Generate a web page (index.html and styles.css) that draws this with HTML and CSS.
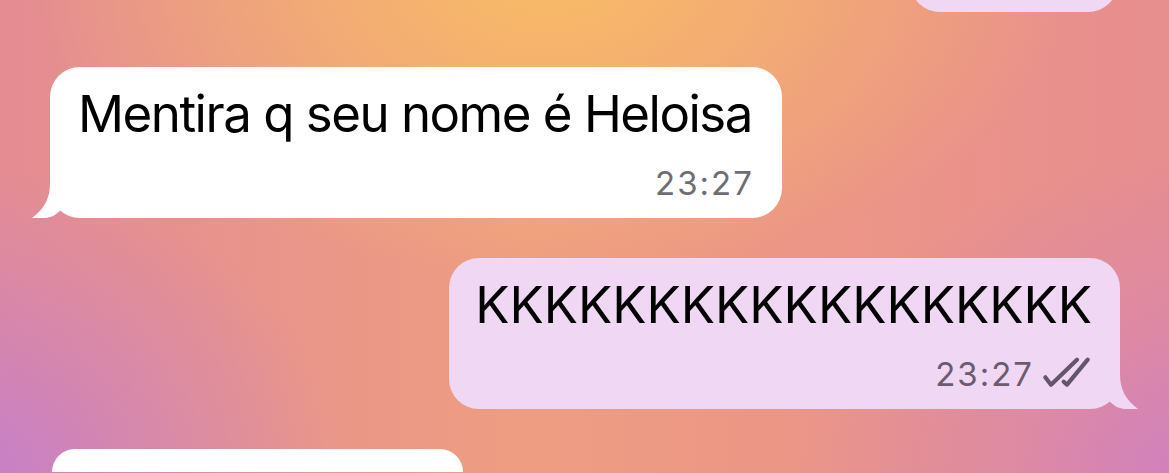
FILE: index.html
```html
<!DOCTYPE html>
<html lang="pt">
<head>
    <meta charset="UTF-8">
    <title>Conversa</title>
    <link rel="stylesheet" href="styles.css">
</head>
<body>
    <div class="chat">
        <div class="bubble out peek"></div>

        <div class="bubble in first">
            <div class="texto justo">Mentira q seu nome é Heloisa</div>
            <div class="meta"><span class="hora">23:27</span></div>
            <svg class="tail" width="50" height="60" viewBox="0 0 50 60">
                <path d="M20,0 L20,25 C20,40 15,50 2,60 C10,60.6 19,60.4 24,57.5 C27,55.5 29,53.5 31,52 L45,40 L20,0 Z"/>
            </svg>
        </div>

        <div class="bubble out">
            <div class="texto">KKKKKKKKKKKKKKKKKK</div>
            <div class="meta">
                <span class="hora">23:27</span>
                <svg class="checks" width="50" height="32" viewBox="0 0 50 32">
                    <path d="M3.3,19.3 L9,26.7 L35,1.7 M21.7,23.7 L25,26.7 L45.7,1.7"/>
                </svg>
            </div>
            <svg class="tail" width="50" height="60" viewBox="0 0 50 60">
                <path d="M20,0 L20,25 C20,40 15,50 2,60 C10,60.6 19,60.4 24,57.5 C27,55.5 29,53.5 31,52 L45,40 L20,0 Z"/>
            </svg>
        </div>

        <div class="bubble in last"></div>
    </div>
</body>
</html>
```

FILE: styles.css
```css
html {
    overflow: hidden;
}
body {
    margin: 0;
    height: 473px;
    overflow: hidden;
    font-family: Inter, "Noto Sans", sans-serif;
    background:
        radial-gradient(ellipse 520px 300px at 47% -5%, #f8bb66 0%, rgba(248,187,102,0.55) 45%, rgba(248,187,102,0) 100%),
        radial-gradient(ellipse 380px 300px at -3% 100%, #c57fcb 0%, rgba(197,127,203,0.5) 45%, rgba(197,127,203,0) 100%),
        radial-gradient(ellipse 420px 320px at 103% 100%, #cf81c0 0%, rgba(207,129,192,0.45) 45%, rgba(207,129,192,0) 100%),
        linear-gradient(90deg, #e48c93 0%, #ee9d82 45%, #eb9488 75%, #e78e8f 100%);
}
.chat {
    display: flex;
    flex-direction: column;
    height: 473px;
    padding: 0 49px 0 50px;
    margin-top: -48px;
}
.bubble {
    position: relative;
    flex-shrink: 0;
    border-radius: 30px;
    padding: 16px 30px 15px 28px;
}
.bubble.in {
    align-self: flex-start;
    background: #fff;
}
.bubble.out {
    align-self: flex-end;
    background: #f0d8f5;
}
.peek {
    width: 208px;
    height: 60px;
    padding: 0;
    box-sizing: border-box;
    margin-right: 2px;
}
.first {
    margin-top: 55px;
}
.bubble.out:not(.peek) {
    margin-top: 40px;
    padding-left: 26px;
    padding-right: 28px;
}
.last {
    margin-top: 40px;
    margin-left: 2px;
    width: 411px;
    height: 23px;
    padding: 0;
    box-sizing: border-box;
    border-radius: 30px 30px 0 0;
}
.texto {
    font-size: 51px;
    line-height: 62px;
    color: #000;
    white-space: nowrap;
}
.texto.justo {
    letter-spacing: -1.5px;
}
.meta {
    display: flex;
    justify-content: flex-end;
    align-items: center;
    gap: 10px;
    margin-top: 18px;
    height: 40px;
}
.hora {
    font-size: 33px;
    line-height: 40px;
    letter-spacing: 2px;
    margin-right: -2px;
    color: #6e6d72;
}
.out .hora {
    color: #6b5b70;
}
.checks {
    overflow: visible;
}
.checks path {
    fill: none;
    stroke: #64566a;
    stroke-width: 4.2;
    stroke-linecap: round;
    stroke-linejoin: round;
}
.tail {
    position: absolute;
    bottom: 0;
    left: -20px;
}
.in .tail path {
    fill: #fff;
}
.out .tail {
    left: auto;
    right: -20px;
    transform: scaleX(-1);
}
.out .tail path {
    fill: #f0d8f5;
}
```
